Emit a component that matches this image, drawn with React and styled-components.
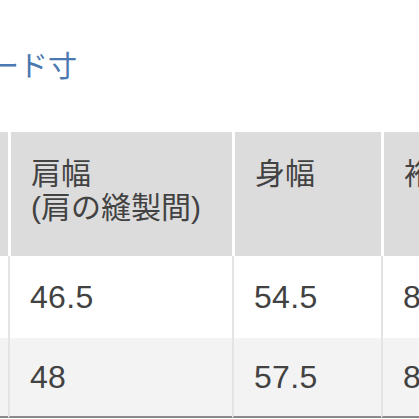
import React from "react";
import styled, { createGlobalStyle } from "styled-components";

const GlobalStyle = createGlobalStyle`
  html, body {
    margin: 0;
    padding: 0;
    background: #ffffff;
    overflow: hidden;
  }
  body {
    font-family: "Liberation Sans", "Noto Sans CJK JP", sans-serif;
  }
`;

// the screenshot shows a horizontally scrolled view, so the page starts off-screen
const Page = styled.div`
  margin-left: -150px;
  padding-top: 47px;
  width: 780px;
`;

const Title = styled.h2`
  margin: 0 0 50px 0;
  padding-left: 111px;
  font-size: 29px;
  line-height: 35px;
  font-weight: 400;
  color: #4a78b0;
  font-family: "Noto Sans CJK JP", sans-serif;
`;

const Table = styled.table`
  border-collapse: separate;
  border-spacing: 0;
  table-layout: fixed;
  width: 720px;
  color: #424242;
`;

const HeadCell = styled.th`
  background: #dcdcdc;
  height: 124px;
  box-sizing: border-box;
  padding: 25px 20px 0 20px;
  vertical-align: top;
  text-align: left;
  font-weight: 400;
  font-size: 30px;
  line-height: 34px;
  font-family: "Liberation Sans", "Noto Sans CJK JP", sans-serif;
  border-left: ${({ $first }) => ($first ? "none" : "3px solid #ffffff")};
  white-space: nowrap;
`;

const Row = styled.tr`
  background: ${({ $alt }) => ($alt ? "#f3f3f3" : "#ffffff")};
`;

const Cell = styled.td`
  height: ${({ $h }) => $h}px;
  box-sizing: border-box;
  padding: 0 20px;
  vertical-align: middle;
  font-size: 32px;
  line-height: 34px;
  letter-spacing: 0.3px;
  border-left: ${({ $first }) => ($first ? "none" : "2px solid #e4e4e4")};
  border-bottom: ${({ $last }) => ($last ? "2px solid #8a8a8a" : "none")};
  white-space: nowrap;
`;

const rows = [
  { size: "S", values: ["46.5", "54.5", "81"], h: 82 },
  { size: "M", values: ["48", "57.5", "83"], h: 80 },
];

export default function App() {
  return (
    <>
      <GlobalStyle />
      <Page>
        <Title>ヌード寸</Title>
        <Table>
          <colgroup>
            <col style={{ width: "158px" }} />
            <col style={{ width: "224px" }} />
            <col style={{ width: "149px" }} />
            <col style={{ width: "189px" }} />
          </colgroup>
          <thead>
            <tr>
              <HeadCell $first>サイズ</HeadCell>
              <HeadCell>
                肩幅
                <br />
                (肩の縫製間)
              </HeadCell>
              <HeadCell>身幅</HeadCell>
              <HeadCell>裄丈</HeadCell>
            </tr>
          </thead>
          <tbody>
            {rows.map((r, i) => (
              <Row key={r.size} $alt={i % 2 === 1}>
                <Cell $first $h={r.h} $last={i === rows.length - 1}>
                  {r.size}
                </Cell>
                {r.values.map((v, j) => (
                  <Cell key={j} $h={r.h} $last={i === rows.length - 1}>
                    {v}
                  </Cell>
                ))}
              </Row>
            ))}
          </tbody>
        </Table>
      </Page>
    </>
  );
}
